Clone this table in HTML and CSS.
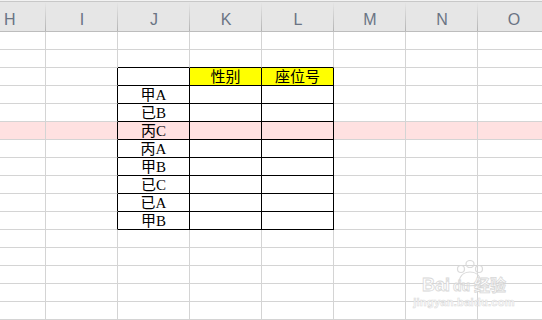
FILE: index.html
```html
<!DOCTYPE html>
<html lang="zh">
<head>
<meta charset="utf-8">
<title>Sheet</title>
<link rel="stylesheet" href="styles.css">
</head>
<body>
<div class="sheet">
  <div class="head">
    <div class="h">H</div><div class="h">I</div><div class="h">J</div><div class="h">K</div><div class="h">L</div><div class="h">M</div><div class="h">N</div><div class="h">O</div>
  </div>
  <div class="row"><div class="c"></div><div class="c"></div><div class="c"></div><div class="c"></div><div class="c"></div><div class="c"></div><div class="c"></div><div class="c"></div></div>
  <div class="row"><div class="c"></div><div class="c"></div><div class="c kb"></div><div class="c kb"></div><div class="c kb"></div><div class="c"></div><div class="c"></div><div class="c"></div></div>
  <div class="row"><div class="c"></div><div class="c kr"></div><div class="c kr kb"></div><div class="c kr kb y">性别</div><div class="c kr kb y">座位号</div><div class="c"></div><div class="c"></div><div class="c"></div></div>
  <div class="row"><div class="c"></div><div class="c kr"></div><div class="c kr kb">甲A</div><div class="c kr kb"></div><div class="c kr kb"></div><div class="c"></div><div class="c"></div><div class="c"></div></div>
  <div class="row"><div class="c"></div><div class="c kr"></div><div class="c kr kb">已B</div><div class="c kr kb"></div><div class="c kr kb"></div><div class="c"></div><div class="c"></div><div class="c"></div></div>
  <div class="row hl"><div class="c"></div><div class="c kr"></div><div class="c kr kb">丙C</div><div class="c kr kb"></div><div class="c kr kb"></div><div class="c"></div><div class="c"></div><div class="c"></div></div>
  <div class="row"><div class="c"></div><div class="c kr"></div><div class="c kr kb">丙A</div><div class="c kr kb"></div><div class="c kr kb"></div><div class="c"></div><div class="c"></div><div class="c"></div></div>
  <div class="row"><div class="c"></div><div class="c kr"></div><div class="c kr kb">甲B</div><div class="c kr kb"></div><div class="c kr kb"></div><div class="c"></div><div class="c"></div><div class="c"></div></div>
  <div class="row"><div class="c"></div><div class="c kr"></div><div class="c kr kb">已C</div><div class="c kr kb"></div><div class="c kr kb"></div><div class="c"></div><div class="c"></div><div class="c"></div></div>
  <div class="row"><div class="c"></div><div class="c kr"></div><div class="c kr kb">已A</div><div class="c kr kb"></div><div class="c kr kb"></div><div class="c"></div><div class="c"></div><div class="c"></div></div>
  <div class="row"><div class="c"></div><div class="c kr"></div><div class="c kr kb">甲B</div><div class="c kr kb"></div><div class="c kr kb"></div><div class="c"></div><div class="c"></div><div class="c"></div></div>
  <div class="row"><div class="c"></div><div class="c"></div><div class="c"></div><div class="c"></div><div class="c"></div><div class="c"></div><div class="c"></div><div class="c"></div></div>
  <div class="row"><div class="c"></div><div class="c"></div><div class="c"></div><div class="c"></div><div class="c"></div><div class="c"></div><div class="c"></div><div class="c"></div></div>
  <div class="row"><div class="c"></div><div class="c"></div><div class="c"></div><div class="c"></div><div class="c"></div><div class="c"></div><div class="c"></div><div class="c"></div></div>
  <div class="row"><div class="c"></div><div class="c"></div><div class="c"></div><div class="c"></div><div class="c"></div><div class="c"></div><div class="c"></div><div class="c"></div></div>
  <div class="row"><div class="c"></div><div class="c"></div><div class="c"></div><div class="c"></div><div class="c"></div><div class="c"></div><div class="c"></div><div class="c"></div></div>

  <div class="wm">
    <svg class="paw" width="40" height="30" viewBox="0 0 40 30">
      <g fill="none" stroke="#d8d8d8" stroke-width="1.2">
        <ellipse cx="20" cy="4" rx="4" ry="3.5"/>
        <ellipse cx="11" cy="9" rx="3.5" ry="3.5"/>
        <ellipse cx="29" cy="9" rx="3.5" ry="3.5"/>
        <path d="M9 22 C10 14 16 12 20 12 C24 12 30 14 31 22 C31 27 9 27 9 22 Z"/>
      </g>
    </svg>
    <div class="wm-line"><span class="wm-bai">Bai</span><span class="wm-du">du</span><span class="wm-jy">经验</span></div>
    <div class="wm-url">jingyan.baidu.com</div>
  </div>
</div>
</body>
</html>
```
FILE: styles.css
```css
html, body {
  margin: 0;
  padding: 0;
  background: #ffffff;
}

.sheet {
  position: relative;
  width: 542px;
  height: 320px;
  overflow: hidden;
  padding-top: 1px;
  box-sizing: border-box;
  background: #f2f2f2;
}

.head,
.row {
  display: grid;
  grid-template-columns: 46px repeat(7, 72px);
  width: 550px;
}

.head {
  height: 31px;
  background: #e6e6e6;
  border-top: 1px solid #c8c8c8;
  border-bottom: 1px solid #bdbdbd;
  box-sizing: border-box;
}

.h {
  background: linear-gradient(#e6e6e6, #b4b4b4) right / 1px 100% no-repeat, #e6e6e6;
  display: flex;
  align-items: center;
  justify-content: center;
  padding-top: 7px;
  box-sizing: border-box;
  font-family: "Liberation Sans", "Open Sans", sans-serif;
  font-size: 16px;
  color: #6a7484;
}

.h:first-child {
  padding-left: 0;
  justify-content: flex-start;
  padding-left: 4px;
}

.row {
  height: 18px;
  background: #ffffff;
}

.c {
  height: 18px;
  box-sizing: border-box;
  border-right: 1px solid #d4d4d4;
  border-bottom: 1px solid #d4d4d4;
  display: flex;
  align-items: flex-end;
  justify-content: center;
  font-family: "Liberation Serif", "Noto Sans CJK SC", serif;
  font-size: 15px;
  line-height: 16px;
  color: #000000;
  padding-top: 1px;
}

.hl .c {
  background: #ffe1e1;
}

.c.kr {
  border-right-color: #000000;
}

.c.kb {
  border-bottom-color: #000000;
}

.c.y {
  background: #ffff00;
}

.wm {
  position: absolute;
  left: 412px;
  top: 260px;
  width: 104px;
  display: flex;
  flex-direction: column;
  align-items: center;
  opacity: 0.9;
}

.paw {
  position: absolute;
  left: 38px;
  top: 0;
}

.wm-line {
  margin-top: 12px;
  display: flex;
  align-items: baseline;
  font-family: "Liberation Sans", sans-serif;
  color: #ffffff;
  -webkit-text-stroke: 0.8px #d4d4d4;
}

.wm-bai {
  font-size: 18px;
  font-weight: bold;
}

.wm-du {
  font-size: 14px;
  font-weight: bold;
  margin: 0 4px 0 3px;
}

.wm-jy {
  font-family: "Noto Sans CJK SC", sans-serif;
  font-size: 16px;
  font-weight: bold;
}

.wm-url {
  font-family: "Liberation Sans", sans-serif;
  font-size: 11px;
  font-weight: bold;
  color: #ffffff;
  -webkit-text-stroke: 0.6px #dadada;
  letter-spacing: 0.3px;
}
```
